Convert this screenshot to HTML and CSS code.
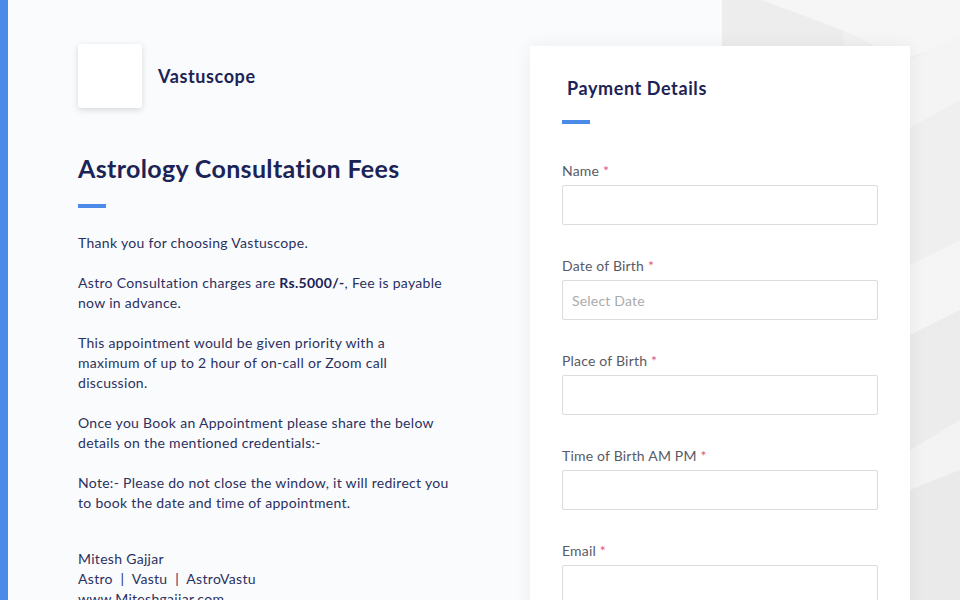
FILE: index.html
```html
<!DOCTYPE html>
<html lang="en">
<head>
<meta charset="utf-8">
<title>Astrology Consultation Fees - Vastuscope</title>
<link rel="stylesheet" href="styles.css">
</head>
<body>
<div class="page">
  <svg class="bg-deco" width="238" height="600" viewBox="0 0 238 600" preserveAspectRatio="none" aria-hidden="true">
    <rect x="0" y="0" width="238" height="600" fill="#ededed"/>
    <polygon points="40,0 238,0 238,40 180,60 120,30" fill="#f6f6f6"/>
    <polygon points="120,30 180,60 238,40 238,110 190,140 130,110" fill="#f1f1f1"/>
    <polygon points="188,60 238,36 238,100 188,128" fill="#f4f4f4"/>
    <polygon points="188,128 238,100 238,250 188,265" fill="#efefef"/>
    <polygon points="188,265 238,240 238,310 188,335" fill="#f5f5f5"/>
    <polygon points="188,335 238,310 238,420 188,450" fill="#ececec"/>
    <polygon points="188,450 238,420 238,470 188,490" fill="#f3f3f3"/>
    <polygon points="188,490 238,470 238,600 188,600" fill="#eaeaea"/>
    <polygon points="0,120 120,60 188,120 188,300 60,360 0,330" fill="#f2f2f2"/>
  </svg>

  <div class="content">
    <section class="intro">
      <div class="brand">
        <div class="brand-logo"></div>
        <span class="brand-name">Vastuscope</span>
      </div>
      <h1 class="title">Astrology Consultation Fees</h1>
      <div class="accent-line"></div>
      <div class="copy">
        <p>Thank you for choosing Vastuscope.</p>
        <p>Astro Consultation charges are <strong>Rs.5000/-</strong>, Fee is payable now in advance.</p>
        <p>This appointment would be given priority with a maximum of up to 2 hour of on-call or Zoom call discussion.</p>
        <p>Once you Book an Appointment please share the below details on the mentioned credentials:-</p>
        <p>Note:- Please do not close the window, it will redirect you to book the date and time of appointment.</p>
        <p class="signature">Mitesh Gajjar<br>Astro &nbsp;|&nbsp; Vastu &nbsp;|&nbsp; AstroVastu<br>www.Miteshgajjar.com</p>
      </div>
    </section>

    <section class="card">
      <h2 class="card-title">Payment Details</h2>
      <div class="accent-line"></div>
      <form class="form">
        <label class="field">
          <span class="label">Name <span class="req">*</span></span>
          <input class="input" type="text">
        </label>
        <label class="field">
          <span class="label">Date of Birth <span class="req">*</span></span>
          <input class="input" type="text" placeholder="Select Date">
        </label>
        <label class="field">
          <span class="label">Place of Birth <span class="req">*</span></span>
          <input class="input" type="text">
        </label>
        <label class="field">
          <span class="label">Time of Birth AM PM <span class="req">*</span></span>
          <input class="input" type="text">
        </label>
        <label class="field">
          <span class="label">Email <span class="req">*</span></span>
          <input class="input" type="text">
        </label>
      </form>
    </section>
  </div>
</div>
</body>
</html>
```

FILE: styles.css
```css
* { box-sizing: border-box; }

html, body {
  margin: 0;
  padding: 0;
  height: 100%;
  overflow: hidden;
}

body {
  font-family: "Lato", "Noto Sans", sans-serif;
  color: #2b3160;
}

.page {
  position: relative;
  min-height: 600px;
  background: linear-gradient(to right, #4b8ae6 0, #4b8ae6 8px, #fafbfc 8px, #fafbfc 722px, #ededed 722px);
}

.bg-deco {
  position: absolute;
  top: 0;
  left: 722px;
  z-index: 0;
}

.content {
  position: relative;
  z-index: 1;
  display: flex;
  align-items: flex-start;
  padding-left: 78px;
  gap: 80px;
}

.intro {
  width: 372px;
  padding-top: 44px;
}

.brand {
  display: flex;
  align-items: center;
  gap: 16px;
}

.brand-logo {
  width: 64px;
  height: 64px;
  background: #fff;
  border-radius: 3px;
  box-shadow: 0 2px 6px rgba(0, 0, 0, 0.14);
}

.brand-name {
  font-size: 18px;
  font-weight: 700;
  letter-spacing: 0.6px;
  color: #1b2357;
}

.title {
  margin: 44px 0 0;
  font-size: 25px;
  line-height: 32px;
  font-weight: 700;
  letter-spacing: 0.35px;
  color: #1b2357;
}

.accent-line {
  width: 28px;
  height: 4px;
  background: #4b8ae6;
  margin-top: 20px;
}

.copy {
  margin-top: 25px;
  font-size: 14px;
  line-height: 20px;
  letter-spacing: 0.3px;
  color: #2b3160;
}

.copy p {
  margin: 0 0 20px;
}

.copy strong {
  font-weight: 700;
  color: #1b2357;
}

.copy .signature {
  margin-top: 36px;
}

.card {
  width: 380px;
  margin-top: 46px;
  background: #fff;
  padding: 30px 32px 40px;
  box-shadow: 0 0 18px rgba(0, 0, 0, 0.06);
  min-height: 600px;
}

.card-title {
  margin: 0 0 0 5px;
  font-size: 18px;
  line-height: 24px;
  font-weight: 700;
  letter-spacing: 0.6px;
  color: #1b2357;
}

.form {
  margin-top: 37px;
  display: flex;
  flex-direction: column;
  gap: 31px;
}

.field {
  display: flex;
  flex-direction: column;
  gap: 4px;
}

.label {
  font-size: 14px;
  line-height: 20px;
  letter-spacing: 0.2px;
  color: #585a66;
}

.req {
  color: #e0557e;
}

.input {
  width: 316px;
  height: 40px;
  border: 1px solid #dcdcdc;
  border-radius: 2px;
  background: #fff;
  padding: 0 9px;
  font-family: inherit;
  font-size: 14px;
  letter-spacing: 0.2px;
  color: #333;
  outline: none;
}

.input::placeholder {
  color: #ababab;
}
```
